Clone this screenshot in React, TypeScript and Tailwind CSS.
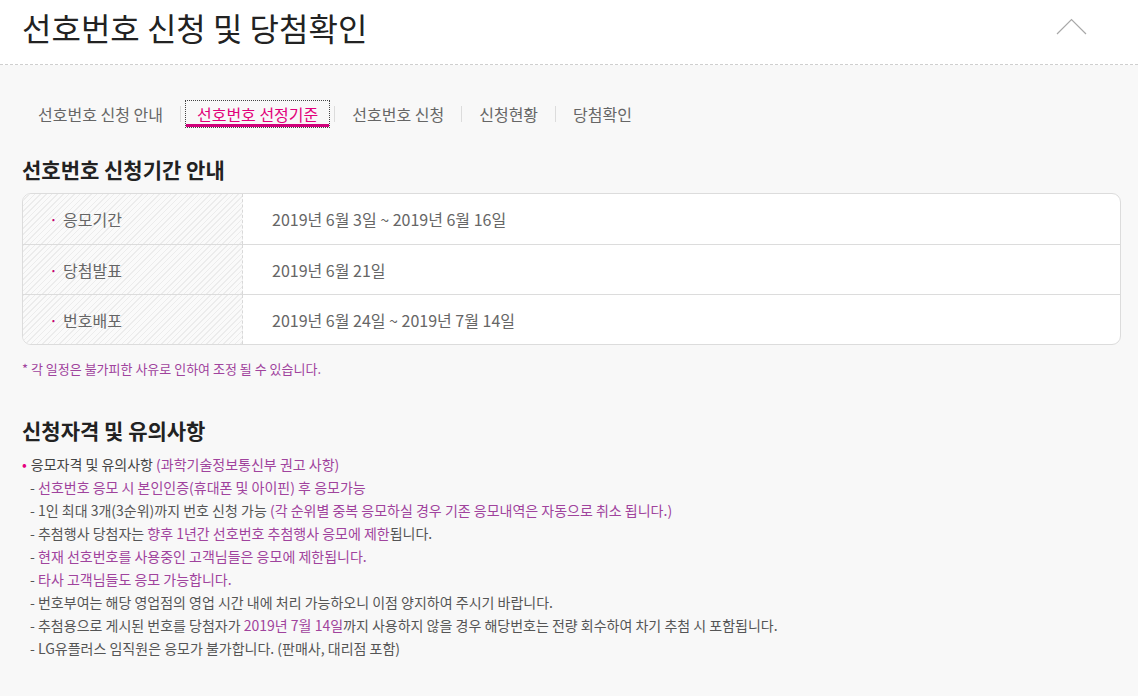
import React from "react";

const tabs = ["선호번호 신청 안내", "선호번호 선정기준", "선호번호 신청", "신청현황", "당첨확인"];

const schedule = [
  { label: "응모기간", value: "2019년 6월 3일 ~ 2019년 6월 16일" },
  { label: "당첨발표", value: "2019년 6월 21일" },
  { label: "번호배포", value: "2019년 6월 24일 ~ 2019년 7월 14일" },
];

function P({ children }: { children: React.ReactNode }) {
  return <span className="text-[#a0439d]">{children}</span>;
}

export default function App() {
  return (
    <div
      className="min-h-[696px] bg-[#f8f8f8] text-[#555]"
      style={{ fontFamily: '"Noto Sans CJK KR", "Noto Sans", sans-serif' }}
    >
      {/* header */}
      <header className="flex h-[65px] items-center justify-between border-b border-dashed border-[#cfcfcf] bg-white pl-[22px] pr-[50px]">
        <h1 className="pb-[10px] text-[32px] leading-[40px] font-normal text-[#222]">
          선호번호 신청 및 당첨확인
        </h1>
        <svg width="32" height="18" viewBox="0 0 32 18" className="mb-[10px]">
          <polyline points="1,16 15.5,1.5 30,16" fill="none" stroke="#a8a8a8" strokeWidth="1.2" />
        </svg>
      </header>

      <main className="pl-[22px] pr-[17px]">
        {/* tabs */}
        <nav className="ml-[3px] mt-[35px] flex items-center">
          {tabs.map((t, i) => (
            <React.Fragment key={t}>
              {i > 0 && <span className="mx-[4px] h-[16px] w-px bg-[#dcdcdc]" />}
              {i === 1 ? (
                <span className="flex h-[28px] items-center border border-dotted border-[#444] px-[11px] text-[16px] text-[#e2007a] shadow-[inset_0_-3px_0_#d0007a]">
                  {t}
                </span>
              ) : (
                <span className="flex h-[28px] items-center px-[13px] text-[16px] text-[#666]">{t}</span>
              )}
            </React.Fragment>
          ))}
        </nav>

        {/* period */}
        <h2 className="mt-[28px] text-[21px] leading-[26px] font-bold text-[#222]">선호번호 신청기간 안내</h2>
        <div className="mt-[11px] overflow-hidden rounded-[9px] border border-[#dcdcdc] bg-white">
          {schedule.map((r, i) => (
            <div key={r.label} className={`flex h-[50px] ${i > 0 ? "border-t border-[#dcdcdc]" : ""}`}>
              <div className="flex w-[220px] items-center border-r border-dashed border-[#d8d8d8] bg-[repeating-linear-gradient(135deg,#ececec_0px,#ececec_1px,#fafafa_1px,#fafafa_4px)] pl-[26px] text-[16px] text-[#666]">
                <span className="mr-[5px] text-[#c4006e]">·</span>
                {r.label}
              </div>
              <div className="flex items-center pl-[29px] text-[16px] text-[#666]">{r.value}</div>
            </div>
          ))}
        </div>
        <p className="mt-[15px] text-[13px] leading-[18px] text-[#a0439d]">
          * 각 일정은 불가피한 사유로 인하여 조정 될 수 있습니다.
        </p>

        {/* notes */}
        <h2 className="mt-[39px] text-[21px] leading-[26px] font-bold text-[#222]">신청자격 및 유의사항</h2>
        <ul className="mt-[10px] text-[14px] leading-[23px]">
          <li>
            <span className="mr-[4px] text-[#e6007e]">•</span>
            <span className="text-[#444]">응모자격 및 유의사항 </span>
            <P>(과학기술정보통신부 권고 사항)</P>
          </li>
          <li className="pl-[8px]">
            - <P>선호번호 응모 시 본인인증(휴대폰 및 아이핀) 후 응모가능</P>
          </li>
          <li className="pl-[8px]">
            - 1인 최대 3개(3순위)까지 번호 신청 가능 <P>(각 순위별 중복 응모하실 경우 기존 응모내역은 자동으로 취소 됩니다.)</P>
          </li>
          <li className="pl-[8px]">
            - 추첨행사 당첨자는 <P>향후 1년간 선호번호 추첨행사 응모에 제한</P>됩니다.
          </li>
          <li className="pl-[8px]">
            - <P>현재 선호번호를 사용중인 고객님들은 응모에 제한됩니다.</P>
          </li>
          <li className="pl-[8px]">
            - <P>타사 고객님들도 응모 가능합니다.</P>
          </li>
          <li className="pl-[8px]">- 번호부여는 해당 영업점의 영업 시간 내에 처리 가능하오니 이점 양지하여 주시기 바랍니다.</li>
          <li className="pl-[8px]">
            - 추첨용으로 게시된 번호를 당첨자가 <P>2019년 7월 14일</P>까지 사용하지 않을 경우 해당번호는 전량 회수하여 차기 추첨 시 포함됩니다.
          </li>
          <li className="pl-[8px]">- LG유플러스 임직원은 응모가 불가합니다. (판매사, 대리점 포함)</li>
        </ul>
      </main>
    </div>
  );
}
